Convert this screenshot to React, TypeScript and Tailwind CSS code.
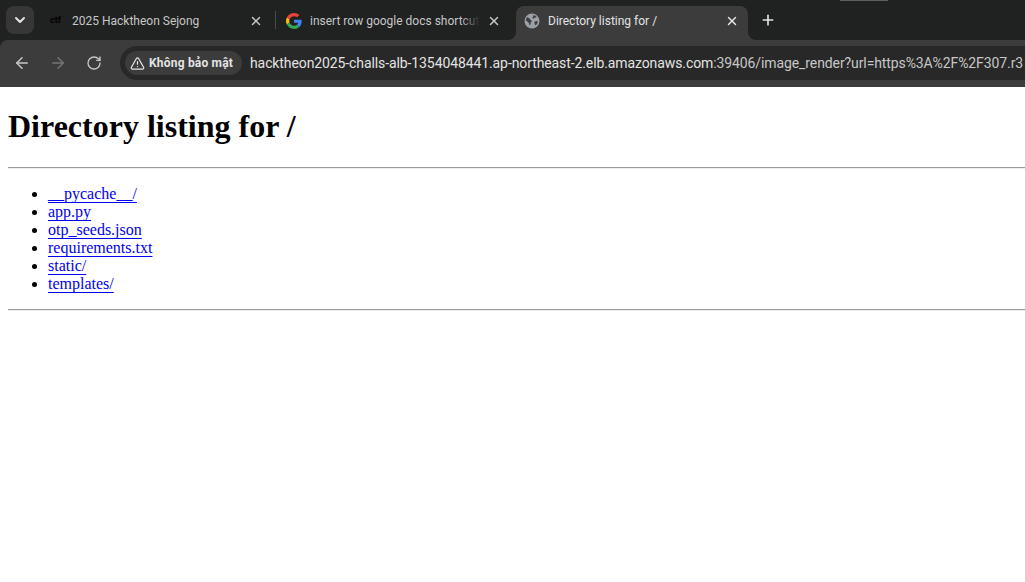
import { ArrowLeft, ArrowRight, ChevronDown, Plus, RotateCw, TriangleAlert, X } from 'lucide-react';

function GoogleIcon() {
  return (
    <svg viewBox="0 0 48 48" className="w-4 h-4 shrink-0">
      <path fill="#EA4335" d="M24 9.5c3.5 0 6.7 1.2 9.2 3.6l6.9-6.9C35.9 2.4 30.5 0 24 0 14.6 0 6.5 5.4 2.6 13.2l8 6.2C12.5 13.7 17.800 9.500 24 9.500z" />
      <path fill="#4285F4" d="M46.900 24.500c0-1.600-.1-3.100-.4-4.500H24v9h12.900c-.6 3-2.200 5.500-4.700 7.200l7.700 6c4.500-4.200 7-10.300 7-17.700z" />
      <path fill="#FBBC05" d="M10.600 28.600c-.5-1.400-.8-3-.8-4.600s.3-3.200.8-4.600l-8-6.200C.9 16.500 0 20.100 0 24s.9 7.500 2.600 10.800l8-6.200z" />
      <path fill="#34A853" d="M24 48c6.500 0 11.900-2.100 15.900-5.800l-7.700-6c-2.200 1.400-4.900 2.300-8.200 2.300-6.200 0-11.500-4.200-13.400-9.900l-8 6.200C6.500 42.600 14.600 48 24 48z" />
    </svg>
  );
}

function GlobeIcon() {
  return (
    <svg viewBox="0 0 16 16" className="w-4 h-4 shrink-0">
      <circle cx="8" cy="8" r="7.500" fill="#9aa0a6" />
      <path fill="#3c3c3c" d="M3 4.300c1.200.2 2.500.9 3 1.900.4.800 1.500.9 1.600 1.800.1.800-.7 1.100-.9 1.800-.2.800-.2 2-.9 2.400-.8-.7-.6-1.800-1.100-2.500C4.100 8.800 2.500 8.500 2 7.600c0-1.200.4-2.400 1-3.300zM9.500 1.900c1.300.3 2.400 1 3.200 2-.6.500-1.600.3-2.200.8-.5.400-.9 1-1.600.8-.6-.2-.4-1-.1-1.400.4-.7 1-1.200.7-2.200zM11 8.400c.9-.2 2.100-.3 2.900.1-.2 1.500-1 2.800-2.200 3.800-.7-.3-.8-1.100-1-1.800-.2-.8-.6-1.800.3-2.100z" />
    </svg>
  );
}

function TabLabel({ children, className }: { children: string; className: string }) {
  return <span className={`text-xs leading-4 whitespace-nowrap ${className}`}>{children}</span>;
}

export default function App() {
  const files = ['__pycache__/', 'app.py', 'otp_seeds.json', 'requirements.txt', 'static/', 'templates/'];

  return (
    <div className="w-[1025px] h-[582px] overflow-hidden bg-white font-['Liberation_Serif',serif]">
      <div className="bg-[#202121] font-['Roboto',sans-serif]">
        {/* Tab strip */}
        <div className="relative h-10 flex items-end pl-[6px]">
          <div className="absolute top-0 left-[840px] w-12 h-px bg-[#5f5f5f]" />
          <div className="w-7 h-7 mb-[6px] rounded-lg bg-[#373737] flex items-center justify-center shrink-0">
            <ChevronDown className="w-4 h-4 text-[#e3e3e3]" strokeWidth={3} />
          </div>

          {/* Tab 1 */}
          <div className="w-[233px] h-[34px] ml-[8px] flex items-center pl-[8px] pr-[12px] pb-[5px] shrink-0">
            <span className="w-4 text-[9px] font-bold text-black leading-none shrink-0">ctf</span>
            <TabLabel className="ml-[6px] flex-1 text-[#c7c7c7]">2025 Hacktheon Sejong</TabLabel>
            <X className="w-[14px] h-[14px] text-[#c7c7c7] shrink-0" strokeWidth={2.5} />
          </div>
          <div className="w-px h-[18px] mb-[11px] bg-[#4a4a4a] shrink-0" />

          {/* Tab 2 */}
          <div className="w-[240px] h-[34px] flex items-center pl-[10px] pr-[15px] pb-[5px] shrink-0">
            <GoogleIcon />
            <div className="relative ml-2 w-[170px] overflow-hidden">
              <TabLabel className="block text-[#c7c7c7]">insert row google docs shortcut</TabLabel>
              <div className="absolute right-0 top-0 w-5 h-full bg-gradient-to-r from-transparent to-[#202121]" />
            </div>
            <X className="ml-auto w-[14px] h-[14px] text-[#c7c7c7] shrink-0" strokeWidth={2.5} />
          </div>

          {/* Active tab */}
          <div className="relative w-[232px] h-[34px] rounded-t-lg bg-[#3c3c3c] flex items-center pl-[8px] pr-[9px] pb-[5px] shrink-0">
            <div className="absolute left-[-8px] bottom-0 w-2 h-2 bg-[#3c3c3c]">
              <div className="w-2 h-2 rounded-br-lg bg-[#202121]" />
            </div>
            <div className="absolute right-[-8px] bottom-0 w-2 h-2 bg-[#3c3c3c]">
              <div className="w-2 h-2 rounded-bl-lg bg-[#202121]" />
            </div>
            <GlobeIcon />
            <TabLabel className="ml-2 flex-1 text-[#e3e3e3]">Directory listing for /</TabLabel>
            <X className="w-[14px] h-[14px] text-[#e3e3e3] shrink-0" strokeWidth={2.5} />
          </div>

          <Plus className="ml-3 mb-3 w-4 h-4 text-[#e3e3e3] shrink-0" strokeWidth={2.5} />
        </div>

        {/* Toolbar */}
        <div className="h-[47px] pb-px bg-[#3c3c3c] rounded-tl-lg flex items-center pl-[13px]">
          <ArrowLeft className="w-[18px] h-[18px] text-[#c7c7c7] shrink-0" strokeWidth={2} />
          <ArrowRight className="ml-[18px] w-[18px] h-[18px] text-[#757575] shrink-0" strokeWidth={2} />
          <RotateCw className="ml-[19px] w-4 h-4 text-[#c7c7c7] shrink-0" strokeWidth={2} />

          {/* Omnibox */}
          <div className="ml-[18px] flex-1 min-w-0 h-[34px] rounded-l-[17px] bg-[#282828] flex items-center pl-[5px] overflow-hidden">
            <div className="w-[117px] h-6 rounded-xl bg-[#3c3c3c] flex items-center pl-[5px] shrink-0">
              <TriangleAlert className="w-[15px] h-[15px] text-[#e3e3e3] shrink-0" strokeWidth={2} />
              <span className="ml-1 text-xs font-bold tracking-[0.2px] text-[#e3e3e3] whitespace-nowrap">Không bảo mật</span>
            </div>
            <span className="ml-2 text-sm tracking-[-0.1px] whitespace-nowrap text-[#e3e3e3]">
              hacktheon2025-challs-alb-1354048441.ap-northeast-2.elb.amazonaws.com
              <span className="text-[#c7c7c7]">:39406/image_render?url=https%3A%2F%2F307.r3</span>
            </span>
          </div>
        </div>
      </div>

      {/* Page */}
      <div className="pl-2 text-black">
        <h1 className="pt-[21px] pb-[22px] text-[32px] leading-[37px] font-bold">Directory listing for /</h1>
        <hr className="h-[2px] border-0 border-t border-t-[#9a9a9a] border-b border-b-[#eeeeee]" />
        <ul className="my-4 pl-10 list-disc text-base leading-[18px]">
          {files.map((name) => (
            <li key={name}>
              <a href="#" className="text-[#0000ee] underline underline-offset-[3px] [text-decoration-skip-ink:none]">{name}</a>
            </li>
          ))}
        </ul>
        <hr className="h-[2px] border-0 border-t border-t-[#9a9a9a] border-b border-b-[#eeeeee]" />
      </div>
    </div>
  );
}
